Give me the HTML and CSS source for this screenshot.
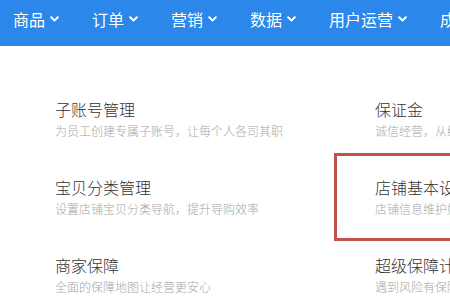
FILE: index.html
```html
<!DOCTYPE html>
<html lang="zh-CN">
<head>
<meta charset="utf-8">
<title>卖家中心</title>
<link rel="stylesheet" href="styles.css">
</head>
<body>
<header class="topbar">
  <nav class="nav">
    <a class="nav-item">商品<svg class="chev" viewBox="0 0 9 6"><path d="M1.2 1.2 L4.5 4.5 L7.8 1.2"/></svg></a>
    <a class="nav-item">订单<svg class="chev" viewBox="0 0 9 6"><path d="M1.2 1.2 L4.5 4.5 L7.8 1.2"/></svg></a>
    <a class="nav-item">营销<svg class="chev" viewBox="0 0 9 6"><path d="M1.2 1.2 L4.5 4.5 L7.8 1.2"/></svg></a>
    <a class="nav-item">数据<svg class="chev" viewBox="0 0 9 6"><path d="M1.2 1.2 L4.5 4.5 L7.8 1.2"/></svg></a>
    <a class="nav-item">用户运营<svg class="chev" viewBox="0 0 9 6"><path d="M1.2 1.2 L4.5 4.5 L7.8 1.2"/></svg></a>
    <a class="nav-item">成长中心<svg class="chev" viewBox="0 0 9 6"><path d="M1.2 1.2 L4.5 4.5 L7.8 1.2"/></svg></a>
  </nav>
</header>
<main class="grid">
  <div class="cell">
    <div class="title">子账号管理</div>
    <div class="desc">为员工创建专属子账号，让每个人各司其职</div>
  </div>
  <div class="cell">
    <div class="title">保证金</div>
    <div class="desc">诚信经营，从缴纳保证金开始</div>
  </div>
  <div class="cell">
    <div class="title">宝贝分类管理</div>
    <div class="desc">设置店铺宝贝分类导航，提升导购效率</div>
  </div>
  <div class="cell cell-active">
    <div class="title">店铺基本设置</div>
    <div class="desc">店铺信息维护好，买家更放心</div>
  </div>
  <div class="cell">
    <div class="title">商家保障</div>
    <div class="desc">全面的保障地图让经营更安心</div>
  </div>
  <div class="cell">
    <div class="title">超级保障计划</div>
    <div class="desc">遇到风险有保障，经营无忧</div>
  </div>
</main>
</body>
</html>
```
FILE: styles.css
```css
html, body {
  margin: 0;
  padding: 0;
  background: #ffffff;
  overflow: hidden;
  width: 450px;
  height: 300px;
}
body {
  font-family: "Noto Sans CJK SC", "Noto Sans", sans-serif;
}
.topbar {
  height: 46px;
  background: #2b87ea;
}
.nav {
  display: flex;
  align-items: center;
  height: 38px;
  padding-left: 13px;
  gap: 33px;
  white-space: nowrap;
}
.nav-item {
  display: flex;
  align-items: center;
  color: #ffffff;
  font-size: 16px;
  line-height: 20px;
  flex: none;
}
.chev {
  width: 9px;
  height: 6px;
  margin-left: 5px;
  fill: none;
  stroke: #ffffff;
  stroke-width: 2;
  stroke-linecap: round;
  stroke-linejoin: round;
}
.grid {
  display: grid;
  grid-template-columns: 320px 320px;
  grid-auto-rows: 78px;
  padding: 34px 0 0 19px;
}
.cell {
  padding: 19px 0 0 36px;
  box-sizing: border-box;
  white-space: nowrap;
  overflow: visible;
}
.cell-active {
  outline: 3px solid #c4504b;
  outline-offset: 2px;
}
.title {
  font-size: 16px;
  line-height: 20px;
  font-weight: 300;
  color: #333333;
}
.desc {
  margin-top: 4px;
  font-size: 12px;
  line-height: 16px;
  font-weight: 300;
  color: #a6a6a6;
}
```
